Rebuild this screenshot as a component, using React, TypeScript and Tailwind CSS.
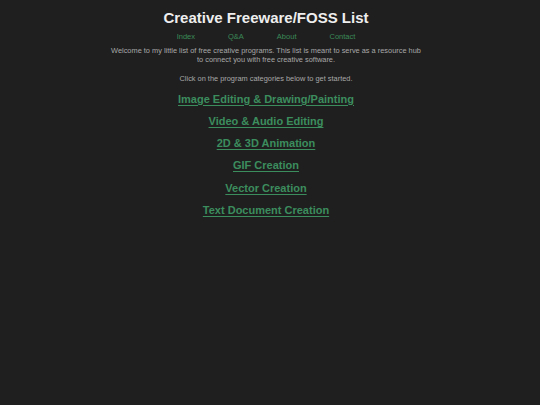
import React from 'react';

const navLinks = ['Index', 'Q&A', 'About', 'Contact'];

const categories = [
    'Image Editing & Drawing/Painting',
    'Video & Audio Editing',
    '2D & 3D Animation',
    'GIF Creation',
    'Vector Creation',
    'Text Document Creation',
];

const App: React.FC = () => {
    return (
        <div className="min-h-[405px] w-full bg-[#1f1f1f] font-['Liberation_Sans',Arial,sans-serif] pr-2">
            <div className="flex flex-col items-center pt-[9px]">
                <h1 className="text-[15px] leading-[17px] font-bold text-[#eeeeee]">Creative Freeware/FOSS List</h1>

                <nav className="flex items-center gap-[33px] mt-[6px] text-[7.5px] leading-[9px]">
                    {navLinks.map(link => (
                        <a key={link} href="#" className="text-[#3b8a58]">{link}</a>
                    ))}
                </nav>

                <p className="mt-[6px] w-[318px] text-center text-[7.4px] leading-[8.6px] text-[#a8a8a8]">
                    Welcome to my little list of free creative programs. This list is meant to serve as a resource hub to connect you with free creative software.
                </p>
                <p className="mt-[11px] text-center text-[7.4px] leading-[8.6px] text-[#a8a8a8]">
                    Click on the program categories below to get started.
                </p>

                <div className="flex flex-col items-center gap-[9.5px] mt-[9px]">
                    {categories.map(cat => (
                        <a key={cat} href="#" className="text-[11px] leading-[12.7px] font-bold text-[#3c8d5e] underline underline-offset-[1.5px]">{cat}</a>
                    ))}
                </div>
            </div>
        </div>
    );
};

export default App;
